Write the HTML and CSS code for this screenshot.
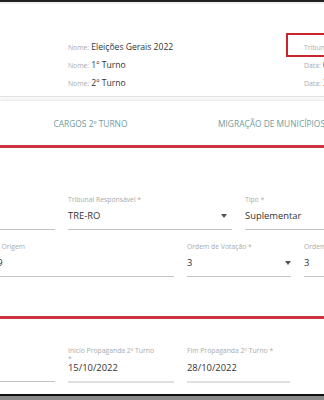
FILE: index.html
```html
<!DOCTYPE html>
<html lang="pt-BR">
<head>
    <meta charset="UTF-8">
    <meta name="viewport" content="width=device-width, initial-scale=1.0">
    <title>Eleição Suplementar</title>
    <link rel="stylesheet" href="styles.css">
</head>
<body>
    <div class="screen">
        <div class="header">
            <div class="info">
                <div class="info-row"><span class="k">Nome:</span> Eleições Gerais 2022</div>
                <div class="info-row"><span class="k">Nome:</span> 1º Turno</div>
                <div class="info-row"><span class="k">Nome:</span> 2º Turno</div>
            </div>
            <div class="info info-right">
                <div class="info-row boxed"><span class="k">Tribunal:</span> TRE-RO</div>
                <div class="info-row"><span class="k">Data:</span> 02/10/2022</div>
                <div class="info-row"><span class="k">Data:</span> 30/10/2022</div>
            </div>
        </div>

        <div class="tabs">
            <div class="tab">CARGOS 2º TURNO</div>
            <div class="tab">MIGRAÇÃO DE MUNICÍPIOS</div>
        </div>

        <div class="divider"></div>

        <div class="section first">
            <div class="row row-a">
                <div class="field w165">
                    <div class="lbl">Eleição Principal *</div>
                    <div class="val"></div>
                </div>
                <div class="field w164">
                    <div class="lbl">Tribunal Responsável *</div>
                    <div class="val select pad">TRE-RO <span class="arrow"></span></div>
                </div>
                <div class="field w164">
                    <div class="lbl">Tipo *</div>
                    <div class="val">Suplementar</div>
                </div>
            </div>
            <div class="row row-b">
                <div class="field w182">
                    <div class="lbl">Nº Origem</div>
                    <div class="val">29</div>
                </div>
                <div class="field w104">
                    <div class="lbl">Ordem de Votação *</div>
                    <div class="val select">3 <span class="arrow"></span></div>
                </div>
                <div class="field w164">
                    <div class="lbl">Ordem de Apuração *</div>
                    <div class="val">3</div>
                </div>
            </div>
        </div>

        <div class="divider"></div>

        <div class="section second">
            <div class="row row-a">
                <div class="field w165">
                    <div class="lbl">Data Eleição 2º Turno</div>
                    <div class="val"></div>
                </div>
                <div class="field w106">
                    <div class="lbl narrow">Inicio Propaganda 2º Turno *</div>
                    <div class="val thick">15/10/2022</div>
                </div>
                <div class="field w103">
                    <div class="lbl">Fim Propaganda 2º Turno *</div>
                    <div class="val thick">28/10/2022</div>
                </div>
            </div>
        </div>

        <div class="bottom"></div>
    </div>
</body>
</html>
```

FILE: styles.css
```css
body {
    margin: 0;
    font-family: "Open Sans", "Noto Sans", sans-serif;
    background-color: #fff;
    color: #333;
    overflow: hidden;
}
.screen {
    width: 324px;
    height: 400px;
    overflow: hidden;
    display: flex;
    flex-direction: column;
    border-top: 2px solid #222;
    box-sizing: border-box;
}
.header {
    height: 95px;
    flex: none;
    display: flex;
    padding: 34px 0 0 68px;
    box-sizing: border-box;
    border-top: 2px solid #f1f1f1;
    border-bottom: 1px solid #e2e2e2;
}
.info {
    width: 218px;
    flex: none;
}
.info-right {
    width: 120px;
}
.info-row {
    font-size: 8.6px;
    line-height: 18px;
    height: 18px;
    white-space: nowrap;
}
.k {
    font-size: 6.8px;
    line-height: 1;
    color: #aaa;
}
.boxed {
    margin: -5px 0 -1px 0;
    border: 2px solid #c9252f;
    padding: 4px 0 0 16px;
    line-height: 16px;
    height: 16px;
}
.info-right .info-row:not(.boxed) {
    padding-left: 18px;
}
.tabs {
    height: 44px;
    flex: none;
    margin-top: 3px;
    display: flex;
    border-top: 1px solid #eee;
    box-shadow: 0 -2px 3px rgba(0, 0, 0, 0.06);
}
.tab {
    width: 181px;
    flex: none;
    display: flex;
    align-items: center;
    justify-content: center;
    font-size: 8.4px;
    color: #6f9ca0;
    white-space: nowrap;
}
.divider {
    height: 3px;
    flex: none;
    background-color: #cc3340;
}
.section {
    flex: none;
}
.section.first {
    height: 168px;
    padding-top: 48px;
    box-sizing: border-box;
}
.section.second {
    height: 75px;
    padding-top: 28px;
    box-sizing: border-box;
}
.row {
    display: flex;
    gap: 13px;
}
.row-a {
    margin-left: -110px;
}
.row-b {
    margin-left: -8px;
    margin-top: 13px;
}
.field {
    flex: none;
}
.w165 { width: 165px; }
.w164 { width: 164px; }
.w182 { width: 182px; }
.w106 { width: 106px; }
.w104 { width: 104px; }
.w103 { width: 103px; }
.lbl {
    font-size: 6.8px;
    line-height: 8px;
    height: 8px;
    color: #aaa;
}
.lbl.narrow {
    width: 86px;
}
.val {
    font-size: 9.4px;
    line-height: 14px;
    height: 14px;
    margin-top: 5px;
    padding-bottom: 6px;
    border-bottom: 1px solid #c4c4c4;
    white-space: nowrap;
}
.second .val {
    margin-top: 6px;
}
.val.thick {
    border-bottom: 2px solid #e0e0e0;
}
.select {
    display: flex;
    justify-content: space-between;
    align-items: center;
}
.select.pad {
    padding-right: 5px;
}
.arrow {
    width: 0;
    height: 0;
    border-left: 3px solid transparent;
    border-right: 3px solid transparent;
    border-top: 4px solid #555;
}
.bottom {
    margin-top: auto;
    height: 5px;
    flex: none;
    border-top: 2px solid #111;
    background-color: #8a8a8a;
}
```
